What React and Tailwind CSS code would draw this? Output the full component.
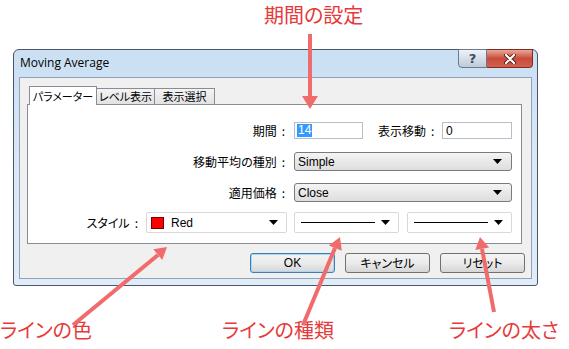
import React from "react";

const jp = "font-['Noto_Sans_CJK_JP',sans-serif] [font-feature-settings:'palt']";
const latin = "font-['Liberation_Sans','Noto_Sans_CJK_JP',sans-serif]";

const Caret = () => (
  <svg width="9" height="5" viewBox="0 0 9 5" className="shrink-0">
    <path d="M0 0 H9 L4.5 5 Z" fill="#000" />
  </svg>
);

// label with a spaced colon, like the MT4 dialog
const Label = ({ text, w }) => (
  <div className={`${w} text-right whitespace-nowrap pr-[3px]`}>
    {text}
    <span className="ml-[5px]">:</span>
  </div>
);

// Win7 style combo (read-only list)
const Combo = ({ value }) => (
  <div
    className={`w-[218px] h-[19px] flex items-center pl-[3px] pr-[9px] rounded-[3px] border border-[#7a7a7a] bg-gradient-to-b from-[#f4f4f4] to-[#dedede] text-[12px] ${latin}`}
  >
    <span className="flex-1">{value}</span>
    <Caret />
  </div>
);

const Btn = ({ children, primary }) => (
  <div
    className={`w-[85px] h-[20px] flex items-center justify-center rounded-[3px] border text-[12px] bg-gradient-to-b from-[#f4f4f4] via-[#ebebeb] to-[#d6d6d6] ${
      primary ? "border-[#3c7fb1] shadow-[inset_0_0_0_1px_#a6d8f4]" : "border-[#707070]"
    } ${jp}`}
  >
    {children}
  </div>
);

const LineSelect = () => (
  <div className="w-[105px] h-[21px] flex items-center pl-[6px] pr-[8px] border border-[#d9d9d9] rounded-[2px] bg-white">
    <div className="w-[74px] h-[1px] bg-black" />
    <div className="flex-1" />
    <Caret />
  </div>
);

export default function App() {
  return (
    <div className={`relative w-[569px] h-[349px] bg-white overflow-hidden ${jp}`}>
      {/* top caption */}
      <div className="h-[49px] pl-[264px] pt-[5px] text-[20px] leading-[20px] text-[#e63a3a]">
        期間の設定
      </div>

      {/* dialog window */}
      <div className="ml-[13px] w-[525px] h-[237px] flex flex-col rounded-t-[6px] rounded-b-[3px] border border-[#4b5667] bg-gradient-to-b from-[#cadff3] via-[#dae8f7] to-[#e0ecf8] px-[5px] pb-[6px]">
        <div className="h-[27px] flex items-start">
          <div className="pt-[5px] pl-[1px] text-[12px] leading-[16px] text-black font-['Open_Sans',sans-serif]">
            Moving Average
          </div>
          <div className="ml-auto -mt-[1px] -mr-[1px] flex">
            <div className="w-[29px] h-[19px] flex items-center justify-center rounded-bl-[4px] border border-[#6c7a8c] bg-gradient-to-b from-[#eef3f8] via-[#d6dee8] to-[#bfcad7] text-[13px] font-bold text-[#3d4b5c] font-['DejaVu_Sans',sans-serif]">
              ?
            </div>
            <div className="w-[46px] h-[19px] flex items-center justify-center rounded-br-[4px] border border-l-0 border-[#7b2d25] bg-gradient-to-b from-[#e9a899] via-[#c9493b] to-[#d3604c]">
              <svg width="12" height="10" viewBox="0 0 12 10">
                <path d="M2 1 L10 9 M10 1 L2 9" stroke="#5a1d16" strokeWidth="4" strokeLinecap="round" />
                <path d="M2 1 L10 9 M10 1 L2 9" stroke="#fff" strokeWidth="2.2" strokeLinecap="round" />
              </svg>
            </div>
          </div>
        </div>

        {/* client area */}
        <div className="flex-1 flex flex-col bg-[#f0f0f0] border border-[#93a3b7] pl-[7px] pr-[9px] pt-[8px]">
          {/* tabs */}
          <div className="h-[19px] -mb-[1px] flex items-end pl-[2px] text-[11px] leading-[13px] whitespace-nowrap relative z-10">
            <div className="w-[68px] h-[19px] flex items-center justify-center bg-white border border-b-0 border-[#898c95]">
              パラメーター
            </div>
            <div className="w-[58px] h-[16px] mb-[1px] flex items-center justify-center border border-l-0 border-b-0 border-[#898c95] bg-gradient-to-b from-[#f4f4f4] to-[#e2e2e2]">
              レベル表示
            </div>
            <div className="w-[60px] h-[16px] mb-[1px] flex items-center justify-center border border-l-0 border-b-0 border-[#898c95] bg-gradient-to-b from-[#f4f4f4] to-[#e2e2e2]">
              表示選択
            </div>
          </div>

          {/* tab page */}
          <div className="h-[140px] bg-white border border-[#898c95] flex flex-col pt-[17px] text-[12px] leading-[14px]">
            <div className="h-[17px] flex items-center">
              <Label text="期間" w="w-[260px]" />
              <div className="ml-[6px] w-[69px] h-[17px] flex items-center pl-[2px] border border-[#b7bec8] bg-white">
                <span className={`bg-[#3399ff] text-white px-[1px] text-[12px] leading-[13px] ${latin}`}>14</span>
              </div>
              <Label text="表示移動" w="ml-[15px] w-[59px]" />
              <div className={`ml-[5px] w-[70px] h-[17px] flex items-center pl-[3px] border border-[#b7bec8] bg-white text-[12px] ${latin}`}>
                0
              </div>
            </div>

            <div className="mt-[13px] h-[19px] flex items-center">
              <Label text="移動平均の種別" w="w-[260px]" />
              <div className="ml-[6px]">
                <Combo value="Simple" />
              </div>
            </div>

            <div className="mt-[12px] h-[19px] flex items-center">
              <Label text="適用価格" w="w-[260px]" />
              <div className="ml-[6px]">
                <Combo value="Close" />
              </div>
            </div>

            <div className="mt-[10px] h-[21px] flex items-center">
              <Label text="スタイル" w="w-[113px]" />
              <div className={`ml-[5px] w-[141px] h-[21px] flex items-center pl-[4px] pr-[8px] border border-[#d9d9d9] rounded-[2px] bg-white text-[12px] ${latin}`}>
                <div className="w-[13px] h-[12px] bg-[#ff0000] border border-[#7a0000]" />
                <span className="ml-[7px] flex-1">Red</span>
                <Caret />
              </div>
              <div className="ml-[7px]">
                <LineSelect />
              </div>
              <div className="ml-[8px]">
                <LineSelect />
              </div>
            </div>
          </div>

          {/* buttons */}
          <div className="mt-[9px] flex justify-end gap-[10px] -mr-[3px]">
            <Btn primary>
              <span className={latin}>OK</span>
            </Btn>
            <Btn>キャンセル</Btn>
            <Btn>リセット</Btn>
          </div>
        </div>
      </div>

      {/* bottom captions */}
      <div className="mt-[34px] flex text-[20px] leading-[20px] text-[#e63a3a] whitespace-nowrap">
        <div className="w-[222px]">ラインの色</div>
        <div className="w-[227px]">ラインの種類</div>
        <div>ラインの太さ</div>
      </div>

      {/* annotation arrows */}
      <svg className="absolute inset-0 pointer-events-none" width="569" height="349" viewBox="0 0 569 349">
        <g stroke="#f06c6c" strokeWidth="4" fill="none">
          <line x1="310" y1="34" x2="310" y2="98" />
          <line x1="73" y1="325" x2="158" y2="255" />
          <line x1="303" y1="325" x2="335" y2="248" />
          <line x1="494" y1="312" x2="482" y2="249" />
        </g>
        <g fill="#f06c6c">
          <polygon points="302,96 318,96 310,109" />
          <polygon points="162.3,260.1 153.3,249.3 167,247" />
          <polygon points="341.8,250.8 328.9,245.4 340,237" />
          <polygon points="489.1,247.5 475.3,250.1 480,237" />
        </g>
      </svg>
    </div>
  );
}
